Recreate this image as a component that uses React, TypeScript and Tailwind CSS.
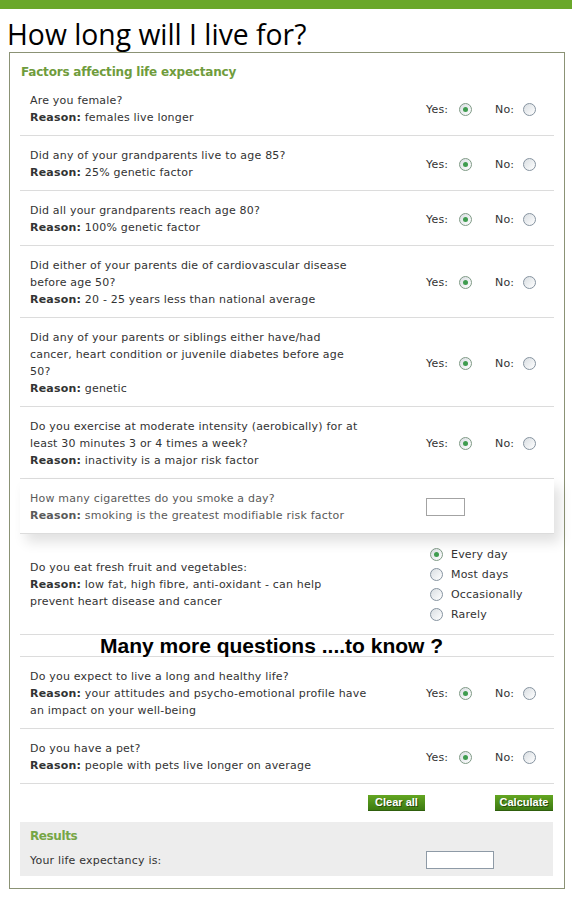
import React from "react";

type YesNo = {
  kind: "yesno";
  lines: React.ReactNode[];
};

type Field = {
  kind: "field";
  lines: React.ReactNode[];
};

type Choice = {
  kind: "choice";
  lines: React.ReactNode[];
  options: string[];
};

type Question = YesNo | Field | Choice;

const R = ({ children }: { children: React.ReactNode }) => (
  <>
    <b className="font-bold">Reason:</b> {children}
  </>
);

const FIRST: Question[] = [
  { kind: "yesno", lines: ["Are you female?", <R>females live longer</R>] },
  {
    kind: "yesno",
    lines: ["Did any of your grandparents live to age 85?", <R>25% genetic factor</R>],
  },
  {
    kind: "yesno",
    lines: ["Did all your grandparents reach age 80?", <R>100% genetic factor</R>],
  },
  {
    kind: "yesno",
    lines: [
      "Did either of your parents die of cardiovascular disease",
      "before age 50?",
      <R>20 - 25 years less than national average</R>,
    ],
  },
  {
    kind: "yesno",
    lines: [
      "Did any of your parents or siblings either have/had",
      "cancer, heart condition or juvenile diabetes before age",
      "50?",
      <R>genetic</R>,
    ],
  },
  {
    kind: "yesno",
    lines: [
      "Do you exercise at moderate intensity (aerobically) for at",
      "least 30 minutes 3 or 4 times a week?",
      <R>inactivity is a major risk factor</R>,
    ],
  },
  {
    kind: "field",
    lines: [
      "How many cigarettes do you smoke a day?",
      <R>smoking is the greatest modifiable risk factor</R>,
    ],
  },
  {
    kind: "choice",
    lines: [
      "Do you eat fresh fruit and vegetables:",
      <R>low fat, high fibre, anti-oxidant - can help</R>,
      "prevent heart disease and cancer",
    ],
    options: ["Every day", "Most days", "Occasionally", "Rarely"],
  },
];

const LAST: Question[] = [
  {
    kind: "yesno",
    lines: [
      "Do you expect to live a long and healthy life?",
      <R>your attitudes and psycho-emotional profile have</R>,
      "an impact on your well-being",
    ],
  },
  {
    kind: "yesno",
    lines: ["Do you have a pet?", <R>people with pets live longer on average</R>],
  },
];

function Radio({ checked }: { checked?: boolean }) {
  return (
    <span
      className={
        "flex h-[13px] w-[13px] shrink-0 items-center justify-center rounded-full border bg-gradient-to-br from-[#d9dee2] to-white " +
        (checked ? "border-[#7f9a86]" : "border-[#8693a0]")
      }
    >
      {checked && <span className="h-[5px] w-[5px] rounded-full bg-[#3f9c4f]" />}
    </span>
  );
}

function Controls({ q }: { q: Question }) {
  if (q.kind === "yesno") {
    return (
      <div className="flex items-center">
        <span className="w-[33px] translate-y-[1px]">Yes:</span>
        <Radio checked />
        <span className="ml-[23px] w-[28px] translate-y-[1px]">No:</span>
        <Radio />
      </div>
    );
  }
  if (q.kind === "field") {
    return <div className="h-[18px] w-[39px] border border-[#a3a3a3] bg-white" />;
  }
  return (
    <div className="flex flex-col pl-[4px]">
      {q.options.map((opt, i) => (
        <div key={opt} className="flex h-[20px] items-center gap-[8px]">
          <Radio checked={i === 0} />
          <span className="translate-y-[1px]">{opt}</span>
        </div>
      ))}
    </div>
  );
}

function Row({ q }: { q: Question }) {
  const raised = q.kind === "field";
  return (
    <div
      className={
        "flex items-center border-b border-[#dcdcdc] pl-[10px] " +
        (q.kind === "choice" ? "pt-[10px] pb-[10px] " : "pt-[11px] pb-[9px] ") +
        (raised ? "relative bg-white text-[#5a5a5a] shadow-[6px_8px_12px_rgba(0,0,0,0.12)]" : "")
      }
    >
      <div className="w-[396px] shrink-0 leading-[17px] whitespace-nowrap">
        {q.lines.map((l, i) => (
          <div key={i}>{l}</div>
        ))}
      </div>
      <Controls q={q} />
    </div>
  );
}

function GreenButton({ label, width }: { label: string; width: string }) {
  return (
    <button
      className={
        "flex h-[16px] items-center justify-center border-b border-[#2f5f0d] bg-gradient-to-b from-[#63a621] to-[#3d7a12] font-['Liberation_Sans',sans-serif] text-[11px] font-bold tracking-normal text-white [text-shadow:1px_1px_0_#2a4d0c] " +
        width
      }
    >
      {label}
    </button>
  );
}

export default function App() {
  return (
    <div className="h-[898px] w-[572px] overflow-hidden bg-white font-['DejaVu_Sans',sans-serif] text-[11px] tracking-[0.2px] text-[#333]">
      <div className="h-[9px] bg-[#6aa82a]" />
      <h1 className="h-[43px] pl-[7px] pt-[8px] font-['Open_Sans',sans-serif] text-[28.3px] leading-[34px] tracking-normal text-black">
        How long will I live for?
      </h1>

      <div className="ml-[9px] w-[556px] border border-[#8b9275] px-[10px] pt-[11px] pb-[12px]">
        <div className="h-[17px] pl-[1px] text-[12px] leading-[17px] font-bold tracking-[-0.2px] text-[#6f9c3c]">
          Factors affecting life expectancy
        </div>

        {FIRST.map((q, i) => (
          <Row key={i} q={q} />
        ))}

        <div className="h-[22px] border-b border-[#dcdcdc] pl-[80px] font-['Liberation_Sans',sans-serif] text-[21px] leading-[22px] font-bold tracking-normal text-black">
          Many more questions ....to know ?
        </div>

        {LAST.map((q, i) => (
          <Row key={i} q={q} />
        ))}

        <div className="mt-[11px] flex justify-end pr-[1px]">
          <div className="mr-[70px]">
            <GreenButton label="Clear all" width="w-[57px]" />
          </div>
          <GreenButton label="Calculate" width="w-[58px]" />
        </div>

        <div className="mt-[11px] mr-[1px] bg-[#ededed] pl-[10px] pt-[6px] pb-[7px]">
          <div className="text-[12px] leading-[17px] font-bold tracking-[-0.4px] text-[#76a646]">Results</div>
          <div className="mt-[6px] flex items-center">
            <span className="w-[396px] translate-y-[1px]">Your life expectancy is:</span>
            <div className="h-[18px] w-[68px] border border-[#8e9aa6] bg-white" />
          </div>
        </div>
      </div>
    </div>
  );
}
